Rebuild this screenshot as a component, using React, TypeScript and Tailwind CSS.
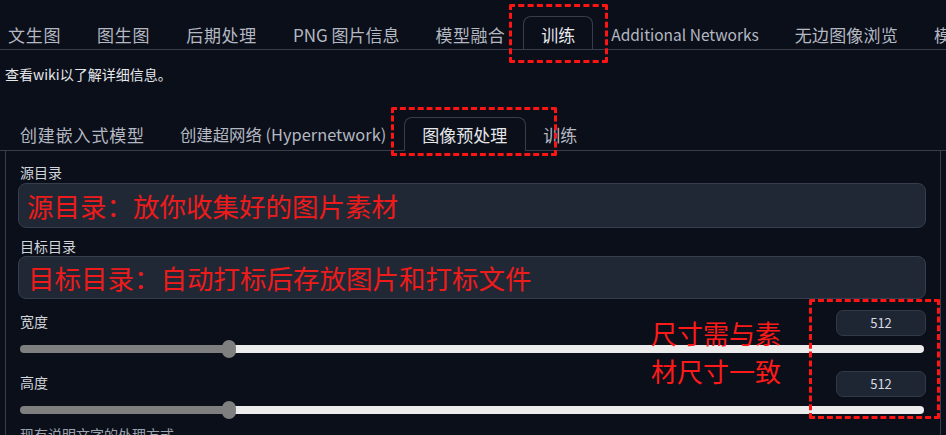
import React from 'react'

type Tab = { label: string; cls: string }

const topTabs: Tab[] = [
  { label: '文生图', cls: 'text-[17px] tracking-[0.7px]' },
  { label: '图生图', cls: 'text-[17px] tracking-[0.7px]' },
  { label: '后期处理', cls: 'text-[17px] tracking-[0.7px]' },
  { label: 'PNG 图片信息', cls: 'text-[17px]' },
  { label: '模型融合', cls: 'text-[17px] tracking-[0.4px]' },
  { label: '训练', cls: 'text-[17px]' },
  { label: 'Additional Networks', cls: 'text-[15.5px]' },
  { label: '无边图像浏览', cls: 'text-[17px] tracking-[0.2px]' },
  { label: '模型转换', cls: 'text-[17px]' },
]

const subTabs: Tab[] = [
  { label: '创建嵌入式模型', cls: 'text-[17px] tracking-[0.85px]' },
  { label: '创建超网络 (Hypernetwork)', cls: 'text-[16.4px]' },
  { label: '图像预处理', cls: 'text-[17px]' },
  { label: '训练', cls: 'text-[17px]' },
]

function Slider({ value }: { value: number }) {
  return (
    <div className="relative mx-[2px] flex h-[8px] items-center">
      <div className="h-full rounded-l-full bg-[#7f7f7f]" style={{ width: value }} />
      <div className="h-full flex-1 rounded-r-full bg-[#ececec]" />
      {/* thumb */}
      <div className="absolute top-[-5px] h-[18px] w-[14px] rounded-full bg-[#7f7f7f]" style={{ left: value - 7 }} />
    </div>
  )
}

function SizeRow({ label }: { label: string }) {
  return (
    <div className="flex items-start justify-between">
      <span className="pl-[2px] pt-[1px] text-[14px] leading-[20px] text-[#d1d5db]">{label}</span>
      <div className="flex h-[26px] w-[90px] items-center justify-center rounded-[7px] border border-[#323a48] bg-[#1f2633] text-[13px] text-[#d8dbe2]">
        512
      </div>
    </div>
  )
}

export default function App() {
  return (
    <div className="relative h-[435px] w-[946px] overflow-hidden bg-[#0b0f19] font-['Noto_Sans_CJK_SC','Noto_Sans',sans-serif]">
      {/* Top tabs */}
      <div className="flex h-[50px] items-end overflow-hidden border-b border-[#373d4b]">
        <div className="-ml-[10px] flex shrink-0 items-end">
          {topTabs.map(t => (
            <div
              key={t.label}
              className={`-mb-px flex h-[34px] shrink-0 items-center whitespace-nowrap pt-[3px] ${t.cls} ${
                t.label === '训练'
                  ? 'rounded-t-[8px] border border-b-0 border-[#373d4b] bg-[#0b0f19] px-[17px] text-[#e5e7eb]'
                  : 'px-[18px] text-[#b4b8c2]'
              }`}
            >
              {t.label}
            </div>
          ))}
        </div>
      </div>

      <p className="mt-[15px] pl-[5px] text-[14px] leading-[18px] text-[#e5e7eb]">查看wiki以了解详细信息。</p>

      {/* Sub tabs */}
      <div className="mt-[34px] flex h-[34px] items-end border-b border-[#373d4b]">
        <div className="ml-[2.5px] flex items-end">
          {subTabs.map(t => (
            <div
              key={t.label}
              className={`-mb-px flex h-[34px] items-center whitespace-nowrap px-[17.5px] pt-[1px] ${t.cls} ${
                t.label === '图像预处理'
                  ? 'rounded-t-[8px] border border-b-0 border-[#373d4b] bg-[#0b0f19] text-[#e5e7eb]'
                  : 'text-[#b4b8c2]'
              }`}
            >
              {t.label}
            </div>
          ))}
        </div>
      </div>

      {/* Panel */}
      <div className="ml-[5px] mr-[5px] border-x border-[#373d4b] pl-[12px] pr-[14px] pt-[11px]">
        <div className="pl-[2px] text-[14px] leading-[20px] text-[#d1d5db]">源目录</div>
        <div className="mt-[1px] flex h-[45px] items-center rounded-[8px] border border-[#363e4d] bg-[#212835] pl-[8px] text-[26.5px] text-[#ee1b1b]">
          源目录：放你收集好的图片素材
        </div>

        <div className="mt-[8px] pl-[2px] text-[14px] leading-[20px] text-[#d1d5db]">目标目录</div>
        <div className="flex h-[43px] items-center rounded-[8px] border border-[#363e4d] bg-[#212835] pl-[9px] text-[26.5px] text-[#ee1b1b]">
          目标目录：自动打标后存放图片和打标文件
        </div>

        <div className="mt-[11px]">
          <SizeRow label="宽度" />
        </div>
        <div className="mt-[9px]">
          <Slider value={209} />
        </div>

        <div className="mt-[18px]">
          <SizeRow label="高度" />
        </div>
        <div className="mt-[9px]">
          <Slider value={209} />
        </div>

        <div className="mt-[10px] pl-[2px] text-[14px] leading-[20px] text-[#9ca3af]">现有说明文字的处理方式</div>
      </div>

      {/* Annotations */}
      <div className="absolute left-[509px] top-[4px] h-[59px] w-[99px] rounded-[2px] border-[3px] border-dashed border-[#ff1414]" />
      <div className="absolute left-[391px] top-[107px] h-[49px] w-[166px] rounded-[2px] border-[3px] border-dashed border-[#ff1414]" />
      <div className="absolute left-[809px] top-[299px] h-[120px] w-[131px] rounded-[2px] border-[3px] border-dashed border-[#ff1414]" />
      <div className="absolute left-[651px] top-[314px] text-[26px] leading-[38px] text-[#ff1a1a]">
        <div>尺寸需与素</div>
        <div>材尺寸一致</div>
      </div>
    </div>
  )
}
